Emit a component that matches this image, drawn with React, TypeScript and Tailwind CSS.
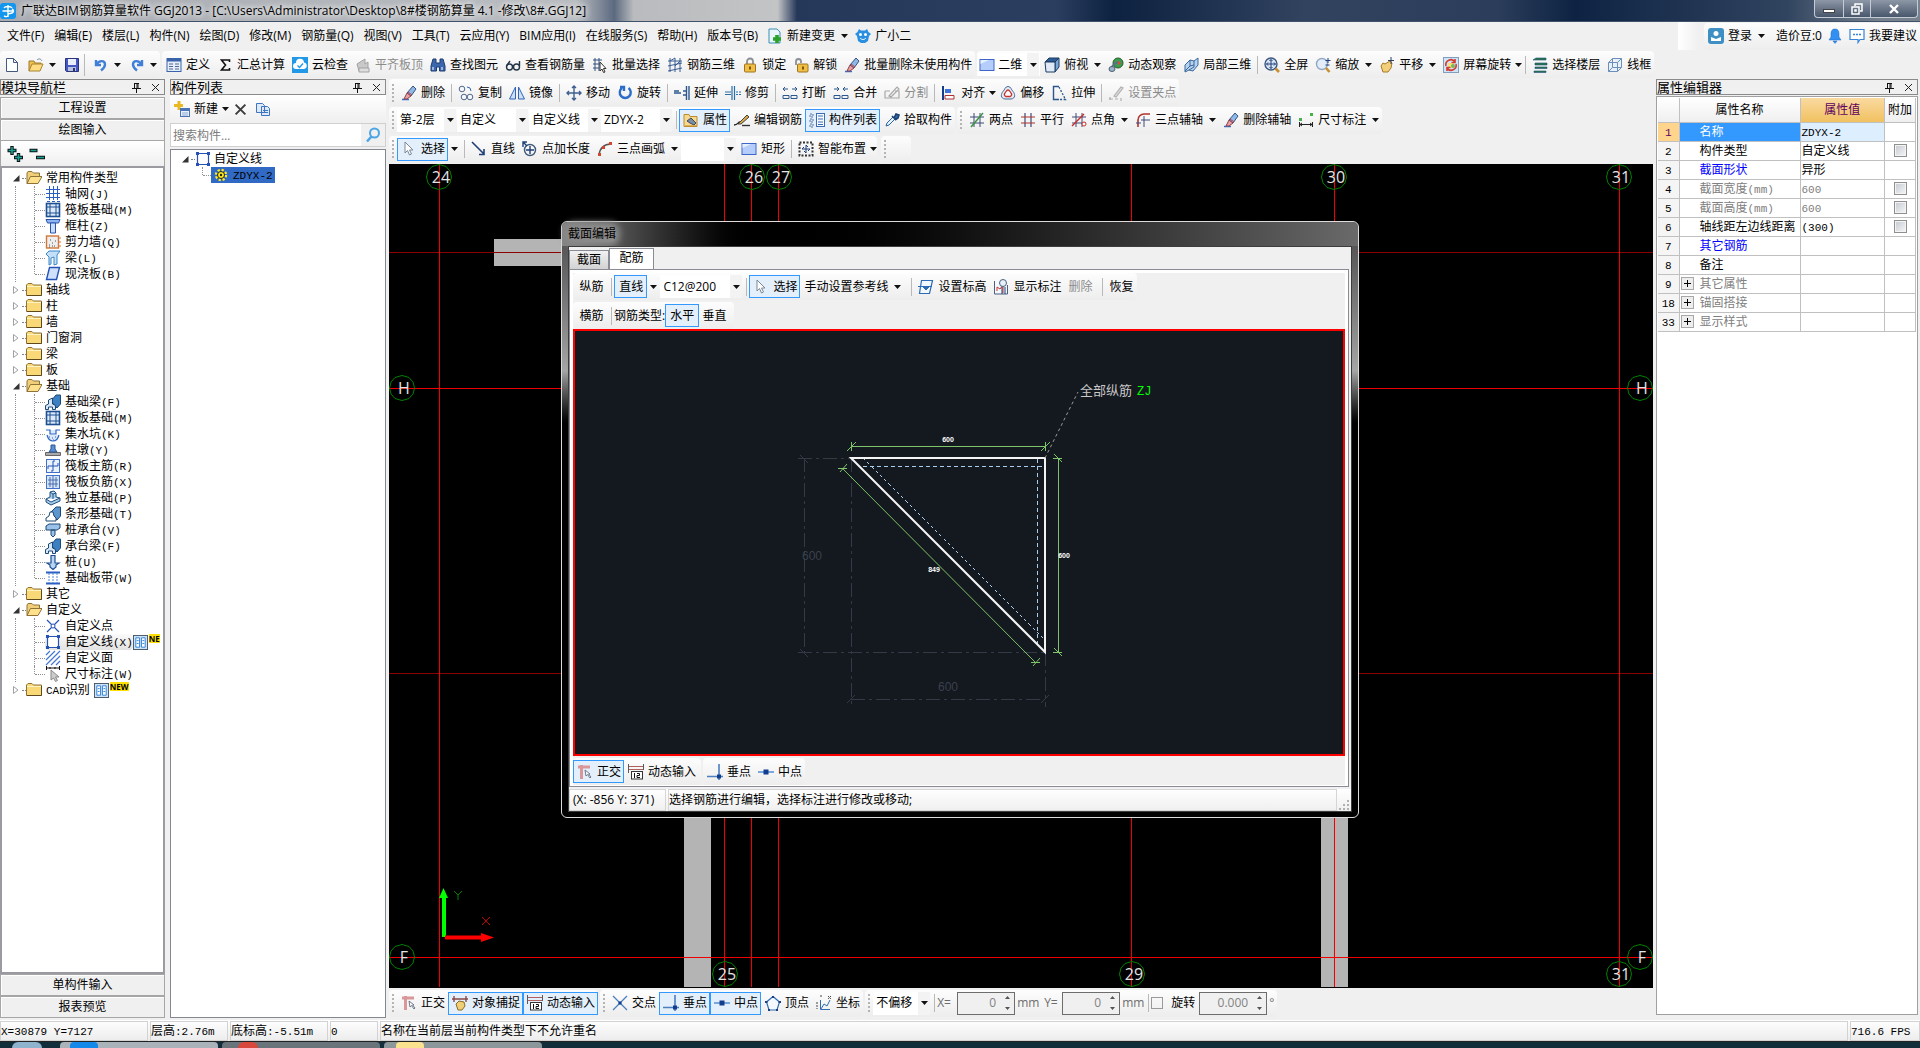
import type { ReactNode } from "react";

const icons: Record<string, ReactNode> = {
  app: (
    <>
      <rect width="16" height="16" rx="3" fill="#1296ee" />
      <path d="M8 2v12M4 5c1-2 7-2 8 0M2.500 8h11M12 6c2 1 2 3 0 4s-4 0-4 2-2 2-4 1" stroke="#fff" strokeWidth="1.400" fill="none" />
    </>
  ),
  file: <path d="M2.500 1.500h7l4 4v9h-11zM9.500 1.500v4h4" fill="#fdfeff" stroke="#44597c" />,
  open: (
    <>
      <path d="M1 14V4h5l1 2h6v3" fill="#f0c050" stroke="#9c7a2a" />
      <path d="M1 14l3-7h11l-3 7z" fill="#ffdc82" stroke="#a8842f" />
      <path d="M9 3c2-2 4-1 5 1" stroke="#6b86b0" fill="none" />
    </>
  ),
  save: (
    <>
      <path d="M1.500 1.500h13v13h-12l-1-1z" fill="#4557c4" stroke="#2a3478" />
      <rect x="4" y="2" width="8" height="6" fill="#e9eefc" />
      <rect x="4" y="10" width="8" height="4" fill="#b8c2dc" />
      <rect x="9" y="11" width="2" height="3" fill="#2a3478" />
    </>
  ),
  undo: <path d="M3 3v5h5M3.500 7.500C6 3 12 3 12 7.500c0 3-2 4.500-4 6" stroke="#3f7fd8" strokeWidth="2.400" fill="none" />,
  redo: <path d="M13 3v5H8M12.500 7.500C10 3 4 3 4 7.500c0 3 2 4.500 4 6" stroke="#3f7fd8" strokeWidth="2.400" fill="none" />,
  define: (
    <>
      <rect x="1" y="1.500" width="14" height="13" fill="#e4edfb" stroke="#3a62a8" />
      <path d="M1 3h14" stroke="#3a62a8" strokeWidth="3" />
      <path d="M3 7h4M3 9.500h4M3 12h4M9 7h4M9 9.500h4M9 12h4" stroke="#54698f" />
    </>
  ),
  sigma: <path d="M12.500 5V3H4.500l4 5-4 5h8v-2" stroke="#111" strokeWidth="1.600" fill="none" />,
  cloud: (
    <>
      <rect width="16" height="16" fill="#2299e6" />
      <path d="M4 12a3 3 0 010-6 4 4 0 018-.500A3.300 3.300 0 0112 12z" fill="#fff" />
      <path d="M5.500 8.500l2 2 3.500-4" stroke="#2299e6" strokeWidth="1.400" fill="none" />
    </>
  ),
  slabTop: (
    <>
      <path d="M2 7l8-5v5l3-2v6l-9 3z" fill="#c9c9c9" stroke="#a2a2a2" />
      <path d="M4 11h10v4H4z" fill="#dedede" stroke="#a2a2a2" />
    </>
  ),
  find: (
    <>
      <path d="M3 2h3v4h4V2h3l2 7v5H9.500v-4h-3v4H1V9z" fill="#3b68ad" stroke="#1f3d70" />
      <path d="M3 10v3M12 10v3" stroke="#b8d0f2" strokeWidth="1.500" />
    </>
  ),
  glasses: (
    <g fill="none" stroke="#243447" strokeWidth="1.400">
      <circle cx="4.500" cy="10" r="3" />
      <circle cx="11.500" cy="10" r="3" />
      <path d="M7.500 9h1M1.500 9L5 4M14.500 9V4" />
    </g>
  ),
  batch: (
    <>
      <path d="M1 3h9M1 7h9M1 11h6M3 1v13M7 1v13" stroke="#34507f" fill="none" />
      <path d="M8 5v9l2-2 1.500 3.500 1.500-.500-1.500-3.500H14z" fill="#fff" stroke="#333" />
    </>
  ),
  rebar3d: <path d="M3 1v14M8 1v14M13 1v14M1 4h14M1 9l14-3M1 14l14-3M3 4l5-3M8 9l5-5" stroke="#3a5c93" fill="none" />,
  lock: (
    <>
      <path d="M5 8V4.500a3 3 0 016 0V8" stroke="#8b8f97" strokeWidth="1.800" fill="none" />
      <rect x="2.500" y="7" width="11" height="8" rx="1" fill="#f1bf45" stroke="#9c7420" />
      <path d="M8 9.500v3" stroke="#6b4c0c" strokeWidth="1.800" />
    </>
  ),
  unlock: (
    <>
      <path d="M3 8V4.500a2.500 2.500 0 015 0V6" stroke="#8b8f97" strokeWidth="1.800" fill="none" />
      <rect x="4.500" y="7" width="10.500" height="8" rx="1" fill="#f1bf45" stroke="#9c7420" />
      <path d="M10 9.500v3" stroke="#6b4c0c" strokeWidth="1.800" />
    </>
  ),
  eraser: (
    <>
      <path d="M1 14.500h7" stroke="#3c6cc0" strokeWidth="1.500" />
      <path d="M6 8l6-7 3 3-5 7z" fill="#8fb7e8" stroke="#35557f" />
      <path d="M3 14l3-6 4 3-4 3z" fill="#e9a1a6" stroke="#8a4048" />
      <path d="M7 7l4 3" stroke="#c23a3a" />
    </>
  ),
  rect: (
    <>
      <rect x="1" y="2.500" width="14" height="11" fill="#b5cdfb" stroke="#3e66c7" />
      <path d="M1.500 13V7L10 3h-8.500z" fill="#e6effe" />
    </>
  ),
  cube: (
    <>
      <path d="M1 5l4-4h10l-4 4z" fill="#2d5d94" stroke="#1d3c62" />
      <path d="M11 5l4-4v9l-4 5z" fill="#79a7d6" stroke="#1d3c62" />
      <path d="M1 5h10v10H2z" fill="#dfeaf6" stroke="#1d3c62" />
    </>
  ),
  orbit: (
    <>
      <circle cx="10" cy="6" r="5" fill="#3f9c4f" stroke="#225c2d" />
      <path d="M2 14c0-3 5-9 9-9" stroke="#5b6f86" strokeWidth="2" fill="none" />
      <ellipse cx="4" cy="12" rx="3" ry="2.500" fill="#9fb4c8" stroke="#4d6176" />
      <path d="M10 4l3 2-3 2z" fill="#e2453b" />
    </>
  ),
  local3d: <path d="M2 8l5-5 4 1 4-3v7l-5 6-4-1-4 2zM7 3v6l-5 5M11 4v6l-5 3M7 9l4-1" fill="#b9d3ee" stroke="#38679c" />,
  full: (
    <>
      <circle cx="7" cy="7" r="6" fill="#dbe8f7" stroke="#3d577d" strokeWidth="1.400" />
      <path d="M11.500 11.500L15 15" stroke="#c79032" strokeWidth="2.600" />
      <path d="M7 2.500v9M2.500 7h9M5.500 4L7 2.500 8.500 4M5.500 10L7 11.500 8.500 10M4 5.500L2.500 7 4 8.500M10 5.500L11.500 7 10 8.500" stroke="#1f3f77" fill="none" />
    </>
  ),
  zoom: (
    <>
      <circle cx="7" cy="7" r="5.500" fill="#e3edf9" stroke="#93a7c2" strokeWidth="1.400" />
      <path d="M11 11l3.500 4" stroke="#c79032" strokeWidth="2.600" />
      <path d="M13 1v5M10.500 3.500h5M10.500 8h4" stroke="#1f3f77" />
    </>
  ),
  pan: (
    <>
      <path d="M2 9l2-3 2 1 5-3 2 2-1 5-3 4H4z" fill="#f3cf7c" stroke="#a57a25" />
      <path d="M12 0v7M9 3.500h6" stroke="#2f3f59" />
    </>
  ),
  rotateView: (
    <>
      <rect x=".500" y=".500" width="15" height="15" fill="#cfe4f6" stroke="#7f9fc0" />
      <path d="M5 6h6v5H5z" fill="#f7e27a" />
      <circle cx="10" cy="9" r="2" fill="#6fba5c" />
      <path d="M3 9a5 5 0 019-4M13 7a5 5 0 01-9 4M12 2v3.500H8.500M4 14v-3.500h3.500" stroke="#d23b2f" strokeWidth="1.600" fill="none" />
    </>
  ),
  floors: <path d="M1 3l3-2h10v2zM3 6h12v2H3zM3 10h12v1.500H3zM2 14h12v1.500H2z" fill="#2b7a45" stroke="#1c4f7e" strokeWidth=".600" />,
  wire: <path d="M1.500 5.500h9v9h-9zM1.500 5.500l4-4h9v9l-4 4M10.500 5.500l4-4M5.500 1.500v9h9M1.500 14.500l4-4" fill="#e8f0fa" stroke="#6c8fba" />,
  copy: (
    <g fill="#f4f7fc" stroke="#52668a">
      <circle cx="4" cy="4" r="2.800" />
      <circle cx="6" cy="12" r="2.800" />
      <circle cx="12" cy="12" r="2.800" />
      <path d="M9 2l3 1 1 3" fill="none" stroke="#2f66b5" />
    </g>
  ),
  mirror: <path d="M6.500 2v12h-6zM9.500 2v12h6z" fill="#cfe0f5" stroke="#2f66b5" />,
  move: <path d="M8 1v14M1 8h14M6 3l2-2 2 2M6 13l2 2 2-2M3 6L1 8l2 2M13 6l2 2-2 2" stroke="#3e5f8f" strokeWidth="1.400" fill="none" />,
  rotate: <path d="M5 3a5.500 5.500 0 106.500 0M3 2h4v4" stroke="#2d6cc8" strokeWidth="2.400" fill="none" />,
  extend: <path d="M0 8h7M9 6h3M9 10h3M0 6h5M12.500 1v14M15 1v14" stroke="#2b578e" strokeWidth="1.400" />,
  trim: <path d="M0 7h6M0 9.500h6M7 1v14M9.500 1v14M11 7h2M14 7h2M11 9.500h2M14 9.500h2" stroke="#2b6fa8" strokeWidth="1.200" />,
  breakIt: <path d="M1 4h5M10 4h5M3 2L1 4l2 2M13 2l2 2-2 2M1 10.500h6v3H1zM9 10.500h6v3H9z" fill="none" stroke="#2b578e" />,
  join: <path d="M1 4h5M10 4h5M4 2l2 2-2 2M12 2l-2 2 2 2M1 10.500h6v3H1zM9 10.500h6v3H9z" fill="none" stroke="#2b578e" />,
  split: <path d="M1 6h5M1 6v7h14V6h-4M5 11l8-9 2 2-8 8z" fill="none" stroke="#a8a8a8" strokeWidth="1.200" />,
  align: (
    <>
      <path d="M2 1v14" stroke="#123d8c" strokeWidth="2" />
      <rect x="4" y="4" width="6" height="4" fill="#3d73d6" />
      <path d="M4 10.500h9v3.500H4z" fill="#fff" stroke="#a33" />
    </>
  ),
  offset: (
    <>
      <path d="M8 1.500c3 0 3 3 5 5s3 7-2 7.500H5c-5-.500-4-5.500-2-7.500s2-5 5-5z" fill="#e4ebf5" stroke="#4b6a97" />
      <path d="M8 5c1.500 0 2 2 3 3s1 3-1 3.500H6c-2-.500-2-2.500-1-3.500s1.500-3 3-3z" fill="#fff" stroke="#c9302c" strokeWidth="1.300" />
    </>
  ),
  stretch: (
    <>
      <path d="M8 1.500H2.500v13H8" fill="none" stroke="#2b578e" strokeWidth="1.400" />
      <path d="M8 2l6.500 12.500H8" fill="none" stroke="#2b578e" strokeWidth="1.300" strokeDasharray="2 1.500" />
    </>
  ),
  grip: <path d="M6 11l7-9 2 1-7 9zM1 14h4M7 14h3M2 12v3M13 13v3" fill="#ddd" stroke="#b0b0b0" strokeWidth="1.200" />,
  props: (
    <>
      <path d="M1 2.500h5l1 2h7v10H1z" fill="#f6d98c" stroke="#b98b32" />
      <path d="M4 9l4-3 5 5-2 2-4-2z" fill="#7d8da3" stroke="#3b4a60" />
      <path d="M2 14h12" stroke="#c98a22" />
    </>
  ),
  editBar: (
    <>
      <path d="M0 13c4 0 4-3 6-3" stroke="#222" strokeWidth="1.400" fill="none" />
      <path d="M4 12l9-9 2 2-8 7z" fill="#d7a84a" stroke="#444" />
      <path d="M8 13.500h8" stroke="#333" strokeWidth="1.400" />
    </>
  ),
  list: (
    <>
      <path d="M1 2h3v3H1zM1 7h3v3H1zM1 12h3v3H1z" fill="#d8e6f8" stroke="#5976a3" strokeDasharray="2 1" />
      <rect x="7.500" y="1.500" width="8" height="13" fill="#f7fbff" stroke="#3c6cb3" />
      <path d="M9 4h5M9 7h5M9 10h5M9 12.500h5" stroke="#3c6cb3" />
    </>
  ),
  pick: (
    <>
      <path d="M2 14l1-3 6-6 2 2-6 6z" fill="#e8f2fc" stroke="#2f66a8" />
      <path d="M8 4l4 4M10 6l2-4 3 1-1 3-3 2" fill="#2f66a8" stroke="#1d4170" strokeWidth="1.600" />
    </>
  ),
  twoPt: <><path d="M5 1v14M11 1v14M1 5h14M1 11h14" stroke="#3d4a78" /><path d="M2 15L14 1" stroke="#3b9440" strokeWidth="1.500" /></>,
  parallel: <><path d="M5 1v14M11 1v14" stroke="#3d4a78" strokeWidth="1.200" /><path d="M1 5h14M1 11h14" stroke="#b0352d" strokeWidth="1.200" /></>,
  angle: <><path d="M5 1v14M11 1v14M1 5h14M1 11h14" stroke="#3d4a78" /><path d="M1 14L13 2" stroke="#c9302c" strokeWidth="1.500" /><circle cx="13" cy="12" r="2" fill="#fff" stroke="#c9302c" /></>,
  arcAxis: <><path d="M3 15V8a6 6 0 016-6h6" stroke="#b0352d" strokeWidth="1.600" fill="none" /><path d="M6 8h9M9 4v11M1 11h5" stroke="#3d4a78" /></>,
  dimTool: <><path d="M1.500 10v5M14.500 10v5M2 12.500h12M4 11l-2 1.500L4 14M12 11l2 1.500-2 1.500" stroke="#222" fill="none" /><path d="M1 6h3v3H1zM12 1h3v3h-3z" fill="#46b04b" /></>,
  arrow: <path d="M4 1v11l2.500-2.500L8.500 14l2-1-2-4H12z" fill="#fff" stroke="#7b8796" />,
  line: <path d="M1 1l12 12M13 8v5.500H8" stroke="#1f3f77" strokeWidth="1.600" fill="none" />,
  ptLen: <><circle cx="8" cy="9" r="5.500" fill="none" stroke="#3d5878" strokeWidth="1.400" /><path d="M8 5v8M4 9h8M1 6V1h4M1 1l4 4" stroke="#1f3f77" fill="none" strokeWidth="1.400" /></>,
  arc: <><path d="M2 14C3 7 7 3 14 3" stroke="#555" strokeWidth="1.500" fill="none" /><path d="M1 12h3v3H1zM5 5h3v3H5zM12 1h3v3h-3z" fill="#d0472e" /></>,
  smart: <><rect x="1.500" y="1.500" width="13" height="13" fill="none" stroke="#333" strokeWidth="2" strokeDasharray="2 1.500" /><path d="M8 4v8M4 8h8M4 8l2-2M12 8l-2 2M8 4l2 2M8 12l-2-2" stroke="#1f3f77" fill="none" /></>,
  newChange: <><path d="M2 1h8l3 3v11H2z" fill="#e8f5fb" stroke="#3f8fb5" /><path d="M10 7v8M6 11h8" stroke="#2ba12b" strokeWidth="3.600" /></>,
  robot: <><path d="M4 1l2 1.500h4L12 1l1.500 3L16 6l-2 2-1 5-3 2H6l-3-2-1-5-2-2 2.500-2z" fill="#2a8fe0" /><circle cx="5.500" cy="6.500" r="1.500" fill="#fff" /><circle cx="10.500" cy="6.500" r="1.500" fill="#fff" /><path d="M5 10c2 2 4 2 6 0" stroke="#fff" fill="none" /></>,
  user: <><rect width="16" height="16" rx="3" fill="#3e8fc4" /><circle cx="8" cy="5.500" r="2.500" fill="#fff" /><path d="M3 13V9l5 2 5-2v4z" fill="#fff" /></>,
  bell: <path d="M8 1c3 0 4 2 4 5v3l2 3H2l2-3V6c0-3 1-5 4-5zM6 13h4l-2 2.500z" fill="#3390f2" stroke="#1d6bc4" strokeWidth=".500" />,
  chat: <><path d="M1 1.500h14v10h-4l-2 3v-3H1z" fill="#fff" stroke="#3584d6" strokeWidth="1.200" /><path d="M4 6.500h8" stroke="#3584d6" strokeWidth="1.500" strokeDasharray="2 1" /></>,
  ortho: <><path d="M1 3h12M4.500 1v14" stroke="#d9979a" strokeWidth="3" /><path d="M8 6l1 6 1.500-1.500L13 14l1-1-2.500-3H13z" fill="#fff" stroke="#6d7a8c" /></>,
  snap: <><path d="M2 1v6M14 1v6M0 4h16" stroke="#8b4a48" strokeWidth="1.400" /><path d="M4 9l3-3 5 1 1 4-3 4H6z" fill="#f0cf79" stroke="#8d6a21" /></>,
  dyn: <><path d="M0 2.500h16M0 5.500h16" stroke="#b0605c" /><path d="M.500 0v9M15.500 0v6" stroke="#5a5a5a" /><rect x="3.500" y="7.500" width="11" height="7.500" fill="#fff" stroke="#333" /><path d="M6.500 9v5M9 9.500h2.500v2H9V13.500h3" stroke="#111" fill="none" /></>,
  cross: <><path d="M1 1l14 14M15 1L1 15" stroke="#4b7fc0" strokeWidth="1.300" /><path d="M6.500 6.500h3v3h-3z" fill="#123d8c" /></>,
  perp: <><path d="M0 12.500h16M12 0v16" stroke="#4b7fc0" strokeWidth="1.600" /><path d="M10 10.500h4v4h-4z" fill="#123d8c" /></>,
  mid: <><path d="M0 8h16" stroke="#6c9fdc" strokeWidth="1.800" /><path d="M5.500 5.500h5v5h-5z" fill="#123d8c" /></>,
  vertex: <><path d="M8 1.500l6.500 5.500-2.500 8H4L1.500 7z" fill="#f4f9ff" stroke="#2d6bb5" strokeWidth="1.200" /><path d="M7 1h2v2H7zM0 6h2.500v2H0zM13.500 6H16v2h-2.500zM3 14h2v2H3zM11 14h2v2h-2z" fill="#1f3f77" /></>,
  coord: <><path d="M4.500 5v9.500H14M5 14l3-5 3 2 3-6" stroke="#2d6bb5" fill="none" /><path d="M5 0v3M12 1l3 3M15 1l-3 3M1 7v7" stroke="#444" fill="none" strokeDasharray="2 1" /></>,
  level: <><path d="M3.500 1.500h11l-3 13h-10z" fill="#f3f8fe" stroke="#2d6bb5" strokeWidth="1.200" /><path d="M0 7.500h14M5 8h6l-3 3z" fill="#2d6bb5" stroke="#2d6bb5" /></>,
  showDim: <><path d="M1.500 2v13h13V6" fill="#f4f8fc" stroke="#49617f" /><path d="M4 12V8l3 2 3-4v8" stroke="#c9302c" fill="none" /><circle cx="10" cy="4" r="3.500" fill="#e8f0fa" stroke="#49617f" /><path d="M9 8v7M12 8v7" stroke="#1f3f77" /></>,
  newItem: <><path d="M5 0v9M0 4.500h9" stroke="#e8b923" strokeWidth="3" /><rect x="6.500" y="7.500" width="9" height="8" fill="#eaf2fd" stroke="#4a74b4" /><path d="M7 9h8" stroke="#4a74b4" strokeWidth="2" /><path d="M8 12h6M8 14h6" stroke="#89a8d4" /></>,
  del: <path d="M2 2l12 12M14 2L2 14" stroke="#3d3d3d" strokeWidth="2.400" />,
  copyDoc: <path d="M1.500 2.500h6l2 2v7h-8zM6.500 5.500h6l2 2v7h-8zM8 9.500h5M8 11.500h5" fill="#dfeaf9" stroke="#3f75c0" />,
  search: <><circle cx="9.500" cy="6" r="4.500" fill="none" stroke="#4ba6e6" strokeWidth="2" /><path d="M6.500 9.500L2 14.500" stroke="#4ba6e6" strokeWidth="2.600" /></>,
  expand: <><path d="M5 0v9M.500 4.500h9M11.500 7v9M7 11.500h9" stroke="#111" strokeWidth="3.400" /><path d="M5 1v7M1.500 4.500h7M11.500 8v7M8 11.500h7" stroke="#12a096" strokeWidth="1.600" /></>,
  collapse: <><path d="M.500 4.500h8M7 11.500h9" stroke="#111" strokeWidth="3.400" /><path d="M1.500 4.500h6M8 11.500h7" stroke="#12a096" strokeWidth="1.600" /></>,
  folder: <><path d="M.500 13.500V3l1.500-1.500h4L7.500 3h8v10.500z" fill="#f8d877" stroke="#8d7338" /><path d="M15.500 4v9.500H1" stroke="#5e4a1c" fill="none" /><path d="M1 4.500h14" stroke="#fff3c4" /></>,
  folderOpen: <><path d="M1 13.500V3l1-1.500h4L7.500 3h6v3" fill="#f0cf78" stroke="#8d7338" /><path d="M1 13.500L4.500 6.500H16l-4 7z" fill="#ffe18c" stroke="#8d7338" /></>,
  grid: <path d="M4.500 0v14M8.500 0v14M12.500 0v14M1 3.500h14M1 7.500h14M1 11.500h14M2 15.500h3M7 15.500h3M12 15.500h3" stroke="#2b5fc4" fill="none" />,
  raft: <><rect x="1.500" y="1.500" width="13" height="13" fill="#dceafb" stroke="#1d4f91" strokeWidth="1.600" /><path d="M5 2v12M11 2v12M2 5h12M2 11h12" stroke="#1d4f91" /></>,
  column: <><path d="M1 1.500h14L13.500 5H2.500z" fill="#8fb4f4" stroke="#2b56a8" /><path d="M5.500 5h5v10h-5z" fill="#cadcfb" stroke="#2b56a8" /></>,
  wall: <><rect x="1.500" y="2" width="12" height="12" fill="#eee" stroke="#d07838" strokeWidth="1.400" /><path d="M4 11h1M7 9h1M9 12h1M5 6h1M10 7h1M7 12h1M4 13h1" stroke="#555" /><path d="M13 4h3M13 8h3M13 12h3" stroke="#d07838" /></>,
  beam: <path d="M1 4l3-3h11l-3 4v9l-3 1V7l-3 1v6l-2 1V7z" fill="#c4e0f8" stroke="#3b87c8" />,
  slab: <path d="M4.500 1.500h10l-3 12h-10z" fill="#cfe0fd" stroke="#2452b5" strokeWidth="1.400" />,
  fbeam: <><path d="M6 7l5-6h4.500v9L12 14z" fill="#3a80c2" stroke="#1d4876" /><path d="M.500 15.500v-4l3-1.500V6l4-2v6l3 1.500v4h-3V13h-4v2.500z" fill="#d6e8f8" stroke="#1d4876" /></>,
  pit: <><path d="M1 4h4v4h6V4h4M2 9c1 4 3 6 6 6s5-2 6-6" fill="#dce9fa" stroke="#2f66c5" strokeWidth="1.200" /><path d="M4 11h1M7 12h1M10 11h1M8 14h1" stroke="#2f66c5" /></>,
  pier: <><path d="M.500 10.500h15v3H.500z" fill="#aaa" stroke="#666" /><path d="M4 10l2-3V3h4v4l2 3z" fill="#5a8fd6" stroke="#2a5692" /></>,
  mainBar: <><rect x="1.500" y="1.500" width="13" height="13" fill="#eaf2fd" stroke="#3f70cc" /><path d="M8 3v10M3 8h10M3 8v3M13 8V5M8 3h2M8 13H6" stroke="#2452b5" fill="none" /></>,
  negBar: <><rect x="1.500" y="1.500" width="13" height="13" fill="#d6e4f8" stroke="#3f70cc" /><path d="M5 3v10M8 2v12M11 3v10M3 6h10M3 10h10" stroke="#4a6fae" fill="none" /></>,
  isoF: <path d="M1 9l4-2V2l4-1 2 2v4l4 1v3l-9 4-5-3zM5 2l3 2 3-1M8 4v5M1 9l5 3 9-4" fill="#a5cbe9" stroke="#1f4f80" />,
  stripF: <><path d="M6 6l5-5h4.500v9L12 14z" fill="#5d96cc" stroke="#1d4876" /><path d="M1 15v-3l3-2 1-4h3l1 4 2 2v3z" fill="#fff" stroke="#1d4876" /></>,
  cap: <path d="M1 4l3-2h11v4l-3 2H1zM6 8h4v5l-2 2-2-2z" fill="#9cc2ea" stroke="#1d4876" />,
  pile: <path d="M6 1.500h4V9h4l-3 2v2l-3 2.500-3-2.500v-2L2 9h4z" fill="#b8d6f2" stroke="#1d4f91" strokeWidth="1.200" />,
  strip: <><path d="M1 2.500h14M1 13.500h14" stroke="#2b5fc4" strokeWidth="2" /><path d="M4 3v10M8 3v10M12 3v10" stroke="#5887d8" strokeDasharray="2 1" /></>,
  custPt: <><path d="M2 2l5 5M14 2L9 7M2 14l5-5M14 14L9 9" stroke="#2452b5" strokeWidth="1.200" /><circle cx="8" cy="8" r="2" fill="#fff" stroke="#2452b5" /></>,
  custLine: <><path d="M2.500 2.500h11v11h-11z" fill="#fff" stroke="#2452b5" strokeWidth="1.200" /><path d="M1 1h3v3H1zM12 1h3v3h-3zM1 12h3v3H1zM12 12h3v3h-3z" fill="#2452b5" /></>,
  custFace: <path d="M1 5l4-4M1 10l9-9M1 15L15 1M6 15l9-9M11 15l4-4" stroke="#4478d0" strokeWidth="1.200" />,
  dimW: <><path d="M1.500 0v4M14.500 0v4M2 2h12M5 1v2M10 1v2" stroke="#111" /><path d="M6 4v10l2.500-2 2 3.500 2-1-2-3.500H14z" fill="#ccc" stroke="#888" /></>,
  doc: <><rect x=".500" y=".500" width="15" height="15" fill="#cfe3f8" stroke="#456" /><path d="M3 3h4v10H3zM9 3h4v10H9z" fill="#fff" stroke="#2b7fd4" /><path d="M4 6h2M4 9h2M10 6h2M10 9h2" stroke="#2b7fd4" /></>,
  gear: <><circle cx="8" cy="8" r="5" fill="none" stroke="#ffec1a" strokeWidth="2.500" strokeDasharray="2.200 1.720" /><circle cx="8" cy="8" r="3.500" fill="#ffec1a" stroke="#222" /><circle cx="8" cy="8" r="1.200" fill="#222" /></>,
};

function Icon({ name, className = "size-4" }: { name: string; className?: string }) {
  return (
    <svg viewBox="0 0 16 16" className={`shrink-0 ${className}`} aria-hidden="true">
      {icons[name]}
    </svg>
  );
}

function Caret() {
  return (
    <svg viewBox="0 0 7 4" className="h-1 w-[7px] shrink-0" aria-hidden="true">
      <path d="M0 0h7L3.500 4z" fill="#111" />
    </svg>
  );
}

// latin runs are set smaller so that they keep the half width of the hanzi
function Song({ children }: { children: string }) {
  return (
    <>
      {children.split(/([\x20-\x7e]+)/).map((part, i) =>
        i % 2 ? (
          <span key={i} className="text-[11px] leading-none whitespace-pre [font-family:'Liberation_Mono',monospace]">
            {part}
          </span>
        ) : (
          part
        )
      )}
    </>
  );
}

type ToolProps = { icon?: string; label: string; on?: boolean; off?: boolean; caret?: "wide" | "tight" };

function Tool({ icon, label, on, off, caret }: ToolProps) {
  return (
    <>
      <button
        type="button"
        disabled={off}
        className={`flex h-[23px] shrink-0 items-center gap-1 border pr-0.5 pl-[3px] whitespace-nowrap ${
          on ? "border-[#3399ff] bg-[#e3effb]" : "border-transparent"
        } ${off ? "text-[#8c8c8c]" : "text-black"}`}
      >
        {icon && <Icon name={icon} />}
        {label}
      </button>
      {caret && (
        <button
          type="button"
          aria-label={`${label} 选项`}
          className={`flex shrink-0 items-center justify-center self-stretch ${caret === "wide" ? "w-[13px]" : "w-2"}`}
        >
          <Caret />
        </button>
      )}
    </>
  );
}

function Sep() {
  return <span className="mr-0.5 ml-[3px] h-[18px] w-px shrink-0 bg-[#b9b9b9]" />;
}

function Grip() {
  return (
    <span className="flex w-2 shrink-0 flex-col items-center gap-0.5">
      {[0, 1, 2, 3, 4].map((i) => (
        <span key={i} className="size-0.5 bg-[#b4b4b4]" />
      ))}
    </span>
  );
}

function Group({ children, className = "" }: { children?: ReactNode; className?: string }) {
  return (
    <div className={`flex h-[27px] shrink-0 items-center rounded-sm bg-linear-to-b from-[#fdfdfd] to-[#ededed] ${className}`}>
      {children}
    </div>
  );
}

function Combo({ label, value, width }: { label: string; value: string; width: string }) {
  return (
    <div className={`relative mr-px flex h-[23px] shrink-0 items-center bg-white ${width}`}>
      <select aria-label={label} className="h-full w-full appearance-none bg-transparent pl-[3px] outline-none">
        <option>{value}</option>
      </select>
      <span className="pointer-events-none absolute inset-y-0 right-0 flex w-3 items-center justify-center bg-[#f3f3f3]">
        <Caret />
      </span>
    </div>
  );
}

function Spin({ label, value, width }: { label: string; value: string; width: string }) {
  return (
    <span className={`flex h-[23px] shrink-0 items-center border border-[#6d6d6d] bg-[#f0f0f0] ${width}`}>
      <input aria-label={label} defaultValue={value} className="w-full min-w-0 bg-transparent text-right text-[#838383] outline-none" />
      <svg viewBox="0 0 14 20" className="ml-1 h-5 w-3.5 shrink-0" aria-hidden="true">
        <path d="M5 6h5L7.500 3zM5 14h5l-2.500 3z" fill="#555" />
      </svg>
    </span>
  );
}

function PanelTitle({ title }: { title: string }) {
  return (
    <div className="flex h-4 shrink-0 items-center border border-[#8a8a8a] bg-[#f0f0f0] text-[13px] leading-[14px]">
      <h2 className="flex-1">{title}</h2>
      <button type="button" aria-label="固定" className="mr-2.5">
        <svg viewBox="0 0 9 11" className="h-[11px] w-[9px]" fill="none" stroke="#111">
          <path d="M2.500 1v5M6 1v5M5 1v5M2 1.500h5M0 6.500h9M4.500 7v4" />
        </svg>
      </button>
      <button type="button" aria-label="关闭" className="mr-1">
        <svg viewBox="0 0 9 9" className="size-[9px]" stroke="#222">
          <path d="M1 1l7 7M8 1L1 8" />
        </svg>
      </button>
    </div>
  );
}

const menus = [
  "文件(F)", "编辑(E)", "楼层(L)", "构件(N)", "绘图(D)", "修改(M)", "钢筋量(Q)",
  "视图(V)", "工具(T)", "云应用(Y)", "BIM应用(I)", "在线服务(S)", "帮助(H)", "版本号(B)",
];

type Leaf = { icon: string; label: string; hot?: boolean };
type Branch = { label: string; leaves?: Leaf[]; isNew?: boolean };

const tree: Branch[] = [
  {
    label: "常用构件类型",
    leaves: [
      { icon: "grid", label: "轴网(J)" },
      { icon: "raft", label: "筏板基础(M)" },
      { icon: "column", label: "框柱(Z)" },
      { icon: "wall", label: "剪力墙(Q)" },
      { icon: "beam", label: "梁(L)" },
      { icon: "slab", label: "现浇板(B)" },
    ],
  },
  { label: "轴线" },
  { label: "柱" },
  { label: "墙" },
  { label: "门窗洞" },
  { label: "梁" },
  { label: "板" },
  {
    label: "基础",
    leaves: [
      { icon: "fbeam", label: "基础梁(F)" },
      { icon: "raft", label: "筏板基础(M)" },
      { icon: "pit", label: "集水坑(K)" },
      { icon: "pier", label: "柱墩(Y)" },
      { icon: "mainBar", label: "筏板主筋(R)" },
      { icon: "negBar", label: "筏板负筋(X)" },
      { icon: "isoF", label: "独立基础(P)" },
      { icon: "stripF", label: "条形基础(T)" },
      { icon: "cap", label: "桩承台(V)" },
      { icon: "fbeam", label: "承台梁(F)" },
      { icon: "pile", label: "桩(U)" },
      { icon: "strip", label: "基础板带(W)" },
    ],
  },
  { label: "其它" },
  {
    label: "自定义",
    leaves: [
      { icon: "custPt", label: "自定义点" },
      { icon: "custLine", label: "自定义线(X)", hot: true },
      { icon: "custFace", label: "自定义面" },
      { icon: "dimW", label: "尺寸标注(W)" },
    ],
  },
  { label: "CAD识别", isNew: true },
];

function TreeArrow({ open }: { open: boolean }) {
  return (
    <svg viewBox="0 0 8 8" className="size-2 shrink-0" aria-hidden="true">
      {open ? <path d="M1 7.500h6.500V1z" fill="#333" /> : <path d="M1.500.500L6 4 1.500 7.500z" fill="#fff" stroke="#a0a0a0" />}
    </svg>
  );
}

function NewMark({ text, className }: { text: string; className: string }) {
  return (
    <>
      <Icon name="doc" className={`size-[15px] ${className}`} />
      <span className="ml-px self-start bg-[#ffe000] text-[8px] leading-[9px] font-bold">{text}</span>
    </>
  );
}

function TreeView() {
  return (
    <ul className="pt-0.5">
      {tree.map((b) => (
        <li key={b.label}>
          <div className="flex h-4 items-center pl-2.5">
            <TreeArrow open={!!b.leaves} />
            <span className="ml-0.5 w-1 border-b border-dotted border-[#808080]" />
            <Icon name={b.leaves ? "folderOpen" : "folder"} />
            <span className="ml-1 shrink-0 whitespace-nowrap">
              <Song>{b.label}</Song>
            </span>
            {b.isNew && <NewMark text="NEW" className="ml-1" />}
          </div>
          {b.leaves && (
            <ul className="ml-[13px] border-l border-dotted border-[#909090]">
              {b.leaves.map((l, i) => (
                <li key={l.label} className="flex h-4 items-center pl-[18px]">
                  <span
                    className={`w-px self-start border-l border-dotted border-[#909090] ${
                      i === b.leaves!.length - 1 ? "h-2" : "h-4"
                    }`}
                  />
                  <span className="w-2.5 shrink-0 border-b border-dotted border-[#909090]" />
                  <span
                    className={`flex shrink-0 items-center gap-1 whitespace-nowrap ${
                      l.hot ? "rounded-sm bg-linear-to-b from-[#fafafa] to-[#e2e2e2]" : ""
                    }`}
                  >
                    <Icon name={l.icon} />
                    <span>
                      <Song>{l.label}</Song>
                    </span>
                  </span>
                  {l.hot && <NewMark text="NE" className="" />}
                </li>
              ))}
            </ul>
          )}
        </li>
      ))}
    </ul>
  );
}

function NavButton({ children }: { children: string }) {
  return (
    <button
      type="button"
      className="h-[22px] shrink-0 border border-[#a6a6a6] bg-[#f0f0f0] shadow-[inset_1px_1px_0_#fff]"
    >
      {children}
    </button>
  );
}

function Bubble({ x, y, t }: { x: number; y: number; t: string }) {
  return (
    <>
      <polygon
        points="0,-12.500 7,-10.500 11,-6 12.500,0 11,6 7,10.500 0,12.500 -7,10.500 -11,6 -12.500,0 -11,-6 -7,-10.500"
        transform={`translate(${x} ${y})`}
        fill="none"
        stroke="#008000"
      />
      <text x={x + 2} y={y + 6} textAnchor="middle" fontSize="16" fill="#e4e4e4">
        {t}
      </text>
    </>
  );
}

function PlanCanvas() {
  return (
    <svg className="h-full w-full [font-family:'Open_Sans',sans-serif]" role="img" aria-label="轴网平面图">
      <g fill="#b4b4b4">
        <rect x="105" y="75" width="90" height="27" />
        <rect x="295" y="600" width="27" height="223" />
        <rect x="932" y="600" width="27" height="223" />
      </g>
      <g stroke="#8b0000" shapeRendering="crispEdges">
        <path d="M0 88.500H1264M0 509.500H1264" />
      </g>
      <g stroke="#f00000" shapeRendering="crispEdges" fill="none">
        <path d="M50.500 0V823M335.500 0V823M362.500 0V823M389.500 0V823M742.500 0V823M945.500 0V823M1230.500 0V823" />
        <path d="M0 224.500H1264M0 793.500H1264" />
      </g>
      <Bubble x={50} y={13} t="24" />
      <Bubble x={363} y={13} t="26" />
      <Bubble x={390} y={13} t="27" />
      <Bubble x={945} y={13} t="30" />
      <Bubble x={1230} y={13} t="31" />
      <Bubble x={336} y={810} t="25" />
      <Bubble x={743} y={810} t="29" />
      <Bubble x={1230} y={810} t="31" />
      <Bubble x={13} y={224} t="H" />
      <Bubble x={13} y={793} t="F" />
      <Bubble x={1251} y={224} t="H" />
      <Bubble x={1251} y={793} t="F" />
      <path d="M55 773V732" stroke="#00ff00" strokeWidth="4" />
      <path d="M50 734h9l-4.500-10z" fill="#00ff00" />
      <path d="M56 773.500H94" stroke="#ff0000" strokeWidth="4" />
      <path d="M92 769v9l13-4.500z" fill="#ff0000" />
      <path d="M65 727l4 4 4-4M69 731v5" stroke="#008000" fill="none" />
      <path d="M93 753l8 8M101 753l-8 8" stroke="#c00000" />
    </svg>
  );
}

function SectionCanvas() {
  return (
    <svg className="h-[427px] w-full border-2 border-[#ff0000] bg-[#14181f] [font-family:'Liberation_Sans',sans-serif]" role="img" aria-label="截面配筋图">
      <g stroke="#343a45" fill="none" shapeRendering="crispEdges" strokeDasharray="14 4 3 4">
        <path d="M223 127.500H276M223 321.500H470M229.500 127V321M276.500 127V376M470.500 321V376M276 368.500H470" />
      </g>
      <path d="M225 124l8 8M225 318l8 8M272 372l8-8M466 372l8-8" stroke="#343a45" />
      <g stroke="#7fc36a" fill="none">
        <path d="M276 115.500H471M483.500 127V321M267 137L460 331M276.500 111v9M470.500 111v9M478 127.500h9M478 321.500h9" />
        <path d="M272 120l9-9M466 120l9-9M479 123l8 8M479 317l8 8M263 137.500h9M265 141l7-8M456 331.500h9M458 335l7-8" />
      </g>
      <g stroke="#a9cdf0" fill="none" shapeRendering="crispEdges">
        <path d="M288 135.500H470M462.500 128V313" strokeDasharray="4 3" />
        <path d="M288 127L470 309" strokeDasharray="3 3" />
      </g>
      <path d="M276 127H470V321Z" fill="none" stroke="#f4f4f4" strokeWidth="2" />
      <path d="M470 127L503 61" stroke="#9a9a9a" strokeDasharray="3 3" />
      <g fontSize="7" fontWeight="bold" fill="#ffffff" textAnchor="middle">
        <text x="373" y="111">600</text>
        <text x="489" y="227">600</text>
        <text x="359" y="241">849</text>
      </g>
      <g fontSize="12" fill="#3a414d" textAnchor="middle">
        <text x="237" y="229">600</text>
        <text x="373" y="360">600</text>
      </g>
      <text x="505" y="64" fontSize="13" fill="#c8c8c8" className="[font-family:'Noto_Sans_CJK_SC',sans-serif]">
        全部纵筋
      </text>
      <text x="562" y="64" fontSize="12" fill="#00ff00" className="[font-family:'Liberation_Mono',monospace]">
        ZJ
      </text>
    </svg>
  );
}

function SectionDialog() {
  return (
    <section
      role="dialog"
      aria-label="截面编辑"
      className="absolute top-[57px] left-[172px] flex w-[798px] flex-col rounded-md border border-[#dcdcdc] bg-linear-to-b from-[#4a4848] via-[#a5a5a5] via-25% to-black to-35% px-1.5 pb-[5px]"
    >
      <header className="-mx-1.5 flex h-6 items-center rounded-t-md bg-linear-to-r from-[#858585] via-black via-25% to-[#6a6a6a] px-1.5">
        <h2 className="rounded-md bg-[#8a8a8a] leading-4 shadow-[0_0_6px_4px_#8a8a8a]">截面编辑</h2>
      </header>
      <div className="flex flex-col border border-[#3d3d3d] bg-[#f0f0f0]">
        <div className="flex h-[22px] items-end">
          <button type="button" className="h-[19px] w-10 border border-b-0 border-[#898c95] bg-linear-to-b from-[#f2f2f2] to-[#d2d2d2] leading-4">
            截面
          </button>
          <button type="button" className="-mb-px h-[22px] w-[45px] border border-b-0 border-[#898c95] bg-white pb-1 leading-4">
            配筋
          </button>
        </div>
        <div className="mr-0.5 border border-[#898c95] bg-white px-[3px] pt-[3px] pb-px">
          <div className="bg-[#f0f0f0]">
            <div className="flex pb-0.5">
              <Group className="pl-0.5">
                <span className="w-[33px] text-center">纵筋</span>
                <Sep />
                <Tool label="&#8202;直线&#8202;" on caret="wide" />
                <Combo label="规格" value="C12@200" width="w-[82px]" />
                <Sep />
                <Tool icon="arrow" label="选择" on />
                <Tool label="手动设置参考线" caret="wide" />
                <span className="w-1" />
                <Sep />
                <Tool icon="level" label="设置标高" />
                <Tool icon="showDim" label="显示标注" />
                <Tool label="删除" off />
                <span className="w-1" />
                <Sep />
                <Tool label="恢复" />
              </Group>
            </div>
            <div className="flex">
              <Group className="pr-1 pl-0.5">
                <span className="w-[33px] text-center">横筋</span>
                <Sep />
                <span>钢筋类型:</span>
                <Tool label="&#8202;水平&#8202;" on />
                <Tool label="垂直" />
              </Group>
            </div>
            <SectionCanvas />
            <div className="flex gap-0.5 pt-0.5">
              <Group className="pr-0.5">
                <Tool icon="ortho" label="正交" on />
                <Tool icon="dyn" label="动态输入" />
              </Group>
              <Group>
                <Tool icon="perp" label="垂点" />
                <Tool icon="mid" label="中点" />
              </Group>
            </div>
          </div>
        </div>
        <footer className="mt-0.5 flex h-[22px] gap-0.5 bg-linear-to-b from-white to-[#efefef]">
          <span className="flex w-[97px] items-center border border-[#d5d5d5] pl-[3px]">(X: -856 Y: 371)</span>
          <span className="flex flex-1 items-center border border-[#d5d5d5]">选择钢筋进行编辑，选择标注进行修改或移动;</span>
          <svg viewBox="0 0 12 12" className="size-3 self-end" fill="#b0b0b0" aria-hidden="true">
            <path d="M8 1h2v2H8zM8 5h2v2H8zM4 5h2v2H4zM8 9h2v2H8zM4 9h2v2H4zM0 9h2v2H0z" />
          </svg>
        </footer>
      </div>
    </section>
  );
}

type Prop = { no: string; name: string; value?: string; check?: boolean; tone?: string; plus?: boolean };

const props: Prop[] = [
  { no: "1", name: "名称", value: "ZDYX-2" },
  { no: "2", name: "构件类型", value: "自定义线", check: true },
  { no: "3", name: "截面形状", value: "异形", tone: "text-[#0000ff]" },
  { no: "4", name: "截面宽度(mm)", value: "600", check: true, tone: "text-[#808080]" },
  { no: "5", name: "截面高度(mm)", value: "600", check: true, tone: "text-[#808080]" },
  { no: "6", name: "轴线距左边线距离", value: "(300)", check: true },
  { no: "7", name: "其它钢筋", tone: "text-[#0000ff]" },
  { no: "8", name: "备注" },
  { no: "9", name: "其它属性", tone: "text-[#808080]", plus: true },
  { no: "18", name: "锚固搭接", tone: "text-[#808080]", plus: true },
  { no: "33", name: "显示样式", tone: "text-[#808080]", plus: true },
];

function PropertyTable() {
  return (
    <table className="w-full table-fixed border-collapse text-left">
      <colgroup>
        <col className="w-[21px]" />
        <col className="w-[121px]" />
        <col />
        <col className="w-[31px]" />
      </colgroup>
      <thead>
        <tr className="h-6 bg-linear-to-b from-white to-[#efefef] text-center [&>th]:border-r [&>th]:border-b [&>th]:border-[#c0c0c0] [&>th]:font-normal">
          <th />
          <th>属性名称</th>
          <th className="bg-linear-to-b from-[#f9d99f] to-[#f1c15f] text-[#600060]">属性值</th>
          <th className="whitespace-nowrap">附加</th>
        </tr>
      </thead>
      <tbody>
        {props.map((p, i) => (
          <tr key={p.no} className="h-[19px] leading-4 [&>td]:border-r [&>td]:border-b [&>td]:border-[#c0c0c0]">
            <td className={`text-center ${i === 0 ? "bg-[#ffd58d] text-[#600060]" : "bg-[#f5f5f5]"}`}>
              <Song>{p.no}</Song>
            </td>
            <td className={`whitespace-nowrap ${i === 0 ? "bg-[#3399ff] text-white" : p.tone ?? ""}`}>
              <span className="flex items-center">
                <span className="flex w-5 justify-center">
                  {p.plus && (
                    <button
                      type="button"
                      aria-label={`展开${p.name}`}
                      className="mr-1 flex size-[13px] items-center justify-center border border-[#a8a8a8] bg-[#eee]"
                    >
                      <svg viewBox="0 0 9 9" className="size-[9px]" stroke="#000">
                        <path d="M4.500 1v7M1 4.500h7" />
                      </svg>
                    </button>
                  )}
                </span>
                <span>
                  <Song>{p.name}</Song>
                </span>
              </span>
            </td>
            <td className={`pl-px ${i === 0 ? "bg-[#ddeeff]" : ""} ${p.tone === "text-[#808080]" ? p.tone : ""}`}>
              <Song>{p.value ?? ""}</Song>
            </td>
            <td>
              {p.check && (
                <input
                  type="checkbox"
                  aria-label={`附加 ${p.name}`}
                  className="mx-auto block size-[13px] appearance-none border border-[#8e8f8f] bg-linear-to-br from-[#c4cad2] to-[#f6f6f6] shadow-[inset_0_0_0_1px_#f4f4f4]"
                />
              )}
            </td>
          </tr>
        ))}
      </tbody>
    </table>
  );
}

function TitleBar() {
  return (
    <header className="flex h-[22px] shrink-0 items-center overflow-hidden border-b border-[#40516b] bg-[linear-gradient(90deg,#a9adb3_0%,#b9bcc0_30%,#5c6a80_32%,#b9bbbe_33%,#c3c4c5_40.500%,#26385a_41.500%,#2b3e60_55%,#0d2140_58%,#31435f_68%,#2b3d5a_78%,#0e2343_82%,#30435f_93%,#77828f_98%)]">
      <Icon name="app" className="mr-[5px] size-4" />
      <h1 className="flex-1 leading-5 whitespace-nowrap [text-shadow:0_0_6px_#fff,0_0_6px_#fff]">
        广联达BIM钢筋算量软件 GGJ2013 - [C:\Users\Administrator\Desktop\8#楼钢筋算量 4.1 -修改\8#.GGJ12]
      </h1>
      <div className="mr-0.5 flex h-[18px] self-start overflow-hidden rounded-b border border-t-0 border-[#c3cbd6] bg-linear-to-b from-[#8d97a6] to-[#49576c]">
        <button type="button" aria-label="最小化" className="flex w-[29px] items-center justify-center border-r border-[#c3cbd6]">
          <span className="mt-1 h-1 w-3 border border-[#444] bg-white" />
        </button>
        <button type="button" aria-label="还原" className="flex w-[27px] items-center justify-center border-r border-[#c3cbd6]">
          <svg viewBox="0 0 12 12" className="size-3" fill="none" stroke="#fff" strokeWidth="1.500">
            <path d="M4 3V1h7v7H9M1 4h7v7H1zM4 7h1v1H4z" />
          </svg>
        </button>
        <button type="button" aria-label="关闭" className="flex w-[46px] items-center justify-center">
          <svg viewBox="0 0 12 12" className="size-3" stroke="#fff" strokeWidth="2.400">
            <path d="M2 2l8 8M10 2l-8 8" />
          </svg>
        </button>
      </div>
    </header>
  );
}

export default function App() {
  return (
    <div className="flex h-screen flex-col overflow-hidden bg-[#f0f0f0] text-[12px] leading-4 text-black [font-family:'Open_Sans','Noto_Sans_CJK_SC',sans-serif]">
      <TitleBar />

      <nav className="flex h-7 shrink-0 items-center pl-0.5">
        {menus.map((m) => (
          <button key={m} type="button" className="px-[5px] whitespace-nowrap">
            {m}
          </button>
        ))}
        <Tool icon="newChange" label="新建变更" caret="wide" />
        <Tool icon="robot" label="广小二" />
        <span className="flex-1" />
        <span className="mr-1.5 h-7 w-5 bg-linear-to-r from-white to-[#f0f0f0]" />
        <Group>
          <Tool icon="user" label="登录" caret="wide" />
          <span className="w-1" />
          <Tool label="造价豆:0" />
          <button type="button" aria-label="通知" className="px-0.5">
            <Icon name="bell" />
          </button>
          <Tool icon="chat" label="我要建议" />
        </Group>
      </nav>

      <div className="flex h-[29px] shrink-0 items-center gap-0.5">
        <Group className="gap-2 pr-[3px] pl-1">
          {[
            ["file", "新建"],
            ["open", "打开"],
            ["save", "保存"],
            ["undo", "撤销"],
            ["redo", "恢复"],
          ].map(([icon, name]) => (
            <div key={icon} className="flex items-center">
              {icon === "undo" && <span className="mr-2 -ml-1 h-[22px] w-px bg-[#b9b9b9]" />}
              <button type="button" aria-label={name}>
                <Icon name={icon} />
              </button>
              {(icon === "open" || icon === "undo" || icon === "redo") && (
                <span className="ml-[5px]">
                  <Caret />
                </span>
              )}
            </div>
          ))}
        </Group>
        <Group>
          <Tool icon="define" label="定义" />
          <Tool icon="sigma" label="汇总计算" />
          <Tool icon="cloud" label="云检查" />
          <Tool icon="slabTop" label="平齐板顶" off />
          <Tool icon="find" label="查找图元" />
          <Tool icon="glasses" label="查看钢筋量" />
          <Tool icon="batch" label="批量选择" />
          <Tool icon="rebar3d" label="钢筋三维" />
          <Tool icon="lock" label="锁定" />
          <Tool icon="unlock" label="解锁" />
          <Tool icon="eraser" label="批量删除未使用构件" />
        </Group>
        <Group>
          <span className="flex items-center bg-white pl-0.5">
            <Icon name="rect" />
            <Combo label="视图" value="二维" width="w-11" />
          </span>
          <Tool icon="cube" label="俯视" caret="wide" />
          <Tool icon="orbit" label="动态观察" />
          <Tool icon="local3d" label="局部三维" />
          <Sep />
          <Tool icon="full" label="全屏" />
          <Tool icon="zoom" label="缩放" caret="wide" />
          <Tool icon="pan" label="平移" caret="wide" />
          <Tool icon="rotateView" label="屏幕旋转" caret="tight" />
          <Sep />
          <Tool icon="floors" label="选择楼层" />
          <Tool icon="wire" label="线框" />
        </Group>
      </div>

      <div className="flex min-h-0 flex-1">
        <aside className="flex w-[165px] shrink-0 flex-col">
          <PanelTitle title="模块导航栏" />
          <div className="mt-0.5 flex flex-col">
            <NavButton>工程设置</NavButton>
            <NavButton>绘图输入</NavButton>
          </div>
          <div className="flex h-[25px] shrink-0 items-center gap-1.5 border-x border-[#a6a6a6] bg-linear-to-b from-white to-[#efefef] pl-1.5">
            <button type="button" aria-label="全部展开">
              <Icon name="expand" />
            </button>
            <button type="button" aria-label="全部折叠">
              <Icon name="collapse" />
            </button>
          </div>
          <div className="min-h-0 flex-1 overflow-hidden border-2 border-[#9a9aa0] bg-white">
            <TreeView />
          </div>
          <NavButton>单构件输入</NavButton>
          <NavButton>报表预览</NavButton>
        </aside>

        <aside className="ml-[5px] flex w-[216px] shrink-0 flex-col">
          <PanelTitle title="构件列表" />
          <div className="flex h-7 shrink-0 items-center bg-linear-to-b from-white to-[#efefef]">
            <Tool icon="newItem" label="新建" caret="tight" />
            <button type="button" aria-label="删除" className="ml-px p-1">
              <Icon name="del" className="size-[13px]" />
            </button>
            <button type="button" aria-label="复制" className="p-1">
              <Icon name="copyDoc" />
            </button>
          </div>
          <div className="mb-0.5 flex h-6 shrink-0 items-center border border-[#d0d0d0]">
            <input aria-label="搜索构件" placeholder="搜索构件…" className="h-full min-w-0 flex-1 bg-white pl-0.5 outline-none placeholder:text-[#7c7c7c]" />
            <button type="button" aria-label="搜索" className="px-1">
              <Icon name="search" />
            </button>
          </div>
          <ul className="min-h-0 flex-1 border border-[#828790] bg-white pt-px">
            <li className="flex h-4 items-center pl-2.5">
              <TreeArrow open />
              <span className="ml-0.5 w-1 border-b border-dotted border-[#808080]" />
              <Icon name="custLine" />
              <span className="ml-[3px]">自定义线</span>
            </li>
            <li className="flex h-4 items-center pl-[31px]">
              <span className="h-2 self-start border-l border-dotted border-[#909090]" />
              <span className="w-2 border-b border-dotted border-[#909090]" />
              <span className="flex h-4 items-center gap-1 bg-[#316ac5] px-0.5">
                <Icon name="gear" />
                <span>
                  <Song>ZDYX-2</Song>
                </span>
              </span>
            </li>
          </ul>
        </aside>

        <main className="ml-[3px] flex min-w-0 flex-1 flex-col">
          <div className="flex h-[27px] shrink-0 items-center">
            <Group>
              <Grip />
              <Tool icon="eraser" label="删除" />
              <Sep />
              <Tool icon="copy" label="复制" />
              <Tool icon="mirror" label="镜像" />
              <Sep />
              <Tool icon="move" label="移动" />
              <Tool icon="rotate" label="旋转" />
              <Sep />
              <Tool icon="extend" label="延伸" />
              <Tool icon="trim" label="修剪" />
              <Sep />
              <Tool icon="breakIt" label="打断" />
              <Tool icon="join" label="合并" />
              <Tool icon="split" label="分割" off />
              <Sep />
              <Tool icon="align" label="对齐" caret="tight" />
              <Tool icon="offset" label="偏移" />
              <Tool icon="stretch" label="拉伸" />
              <Sep />
              <Tool icon="grip" label="设置夹点" off />
            </Group>
          </div>
          <div className="flex h-7 shrink-0 items-center gap-0.5">
            <Group>
              <Grip />
              <Combo label="楼层" value="第-2层" width="w-[59px]" />
              <Combo label="构件大类" value="自定义" width="w-[71px]" />
              <Combo label="构件类型" value="自定义线" width="w-[71px]" />
              <Combo label="构件" value="ZDYX-2" width="w-[71px]" />
              <Sep />
              <Tool icon="props" label="属性" on />
              <Tool icon="editBar" label="编辑钢筋" />
              <Tool icon="list" label="构件列表" on />
              <Tool icon="pick" label="拾取构件" />
            </Group>
            <Group>
              <Grip />
              <Tool icon="twoPt" label="两点" />
              <Tool icon="parallel" label="平行" />
              <Tool icon="angle" label="点角" caret="wide" />
              <Tool icon="arcAxis" label="三点辅轴" caret="wide" />
              <Tool icon="eraser" label="删除辅轴" />
              <Tool icon="dimTool" label="尺寸标注" caret="wide" />
            </Group>
          </div>
          <div className="flex h-[30px] shrink-0 items-center gap-1">
            <Group>
              <Grip />
              <Tool icon="arrow" label="选择" on caret="wide" />
              <Sep />
              <Tool icon="line" label="直线" />
              <Tool icon="ptLen" label="点加长度" />
              <Tool icon="arc" label="三点画弧" caret="wide" />
              <Combo label="参数" value="" width="w-[55px]" />
              <Tool icon="rect" label="矩形" />
              <Sep />
              <Tool icon="smart" label="智能布置" caret="tight" />
            </Group>
            <Group className="pr-[22px]">
              <Grip />
            </Group>
          </div>

          <div className="relative min-h-0 flex-1 overflow-hidden bg-black">
            <PlanCanvas />
            <SectionDialog />
          </div>

          <div className="flex h-[30px] shrink-0 items-center gap-0.5">
            <Group>
              <Grip />
              <Tool icon="ortho" label="正交" />
              <Tool icon="snap" label="对象捕捉" on />
              <Tool icon="dyn" label="动态输入" on />
            </Group>
            <Group>
              <Grip />
              <Tool icon="cross" label="交点" />
              <Tool icon="perp" label="垂点" on />
              <Tool icon="mid" label="中点" on />
              <Tool icon="vertex" label="顶点" />
              <Tool icon="coord" label="坐标" />
            </Group>
            <Group className="text-[#6d6d6d]">
              <Grip />
              <span className="text-black">
                <Combo label="偏移方式" value="不偏移" width="w-[57px]" />
              </span>
              <Sep />
              <span className="w-5">X=</span>
              <Spin label="X 偏移" value="0" width="w-[58px]" />
              <span className="w-[27px] pl-0.5">mm</span>
              <span className="w-5 pl-0.5">Y=</span>
              <Spin label="Y 偏移" value="0" width="w-[58px]" />
              <span className="w-[25px] pl-0.5">mm</span>
              <Sep />
              <label className="flex items-center gap-2">
                <input type="checkbox" className="size-3 appearance-none border border-[#9a9a9a]" />
                <span className="text-black">旋转</span>
              </label>
              <span className="w-1" />
              <Spin label="旋转角度" value="0.000" width="w-[68px]" />
              <span className="w-2.5 pl-0.5">°</span>
            </Group>
          </div>
        </main>

        <aside className="mr-0.5 ml-[3px] flex w-[262px] shrink-0 flex-col pb-[3px]">
          <PanelTitle title="属性编辑器" />
          <div className="mt-px min-h-0 flex-1 border border-[#a0a0a0] bg-white p-px">
            <PropertyTable />
          </div>
        </aside>
      </div>

      <footer className="mt-0.5 flex h-[21px] shrink-0 items-center gap-0.5 bg-linear-to-b from-white to-[#ececec] [&>span]:h-5 [&>span]:border [&>span]:border-[#d2d2d2] [&>span]:leading-[18px]">
        <span className="w-[148px]"><Song>X=30879 Y=7127</Song></span>
        <span className="w-[78px]"><Song>层高:2.76m</Song></span>
        <span className="w-[98px]"><Song>底标高:-5.51m</Song></span>
        <span className="w-12"><Song>0</Song></span>
        <span className="flex-1">名称在当前层当前构件类型下不允许重名</span>
        <span className="w-[70px]"><Song>716.6 FPS</Song></span>
      </footer>
      <div className="flex h-[7px] shrink-0 items-end gap-1 overflow-hidden border-t border-[#222] bg-[#122e3b]">
        <span className="ml-3 h-1.5 w-[30px] rounded-t-full bg-[#8fb3cc]" />
        <span className="ml-3.5 flex h-1.5 w-[158px] rounded-t-sm bg-[#a9b3b9] pl-2.5">
          <span className="h-1.5 w-7 rounded-t bg-[#1489ea]" />
        </span>
        <span className="flex h-1.5 w-[158px] rounded-t-sm bg-[#69757a] pl-4">
          <span className="h-1.5 w-5 rounded-t-full bg-[#d8483c]" />
        </span>
        <span className="flex h-1.5 w-[158px] rounded-t-sm bg-[#8c979c] pl-3">
          <span className="h-1.5 w-7 rounded-t bg-[#fbe28f]" />
        </span>
      </div>
    </div>
  );
}
